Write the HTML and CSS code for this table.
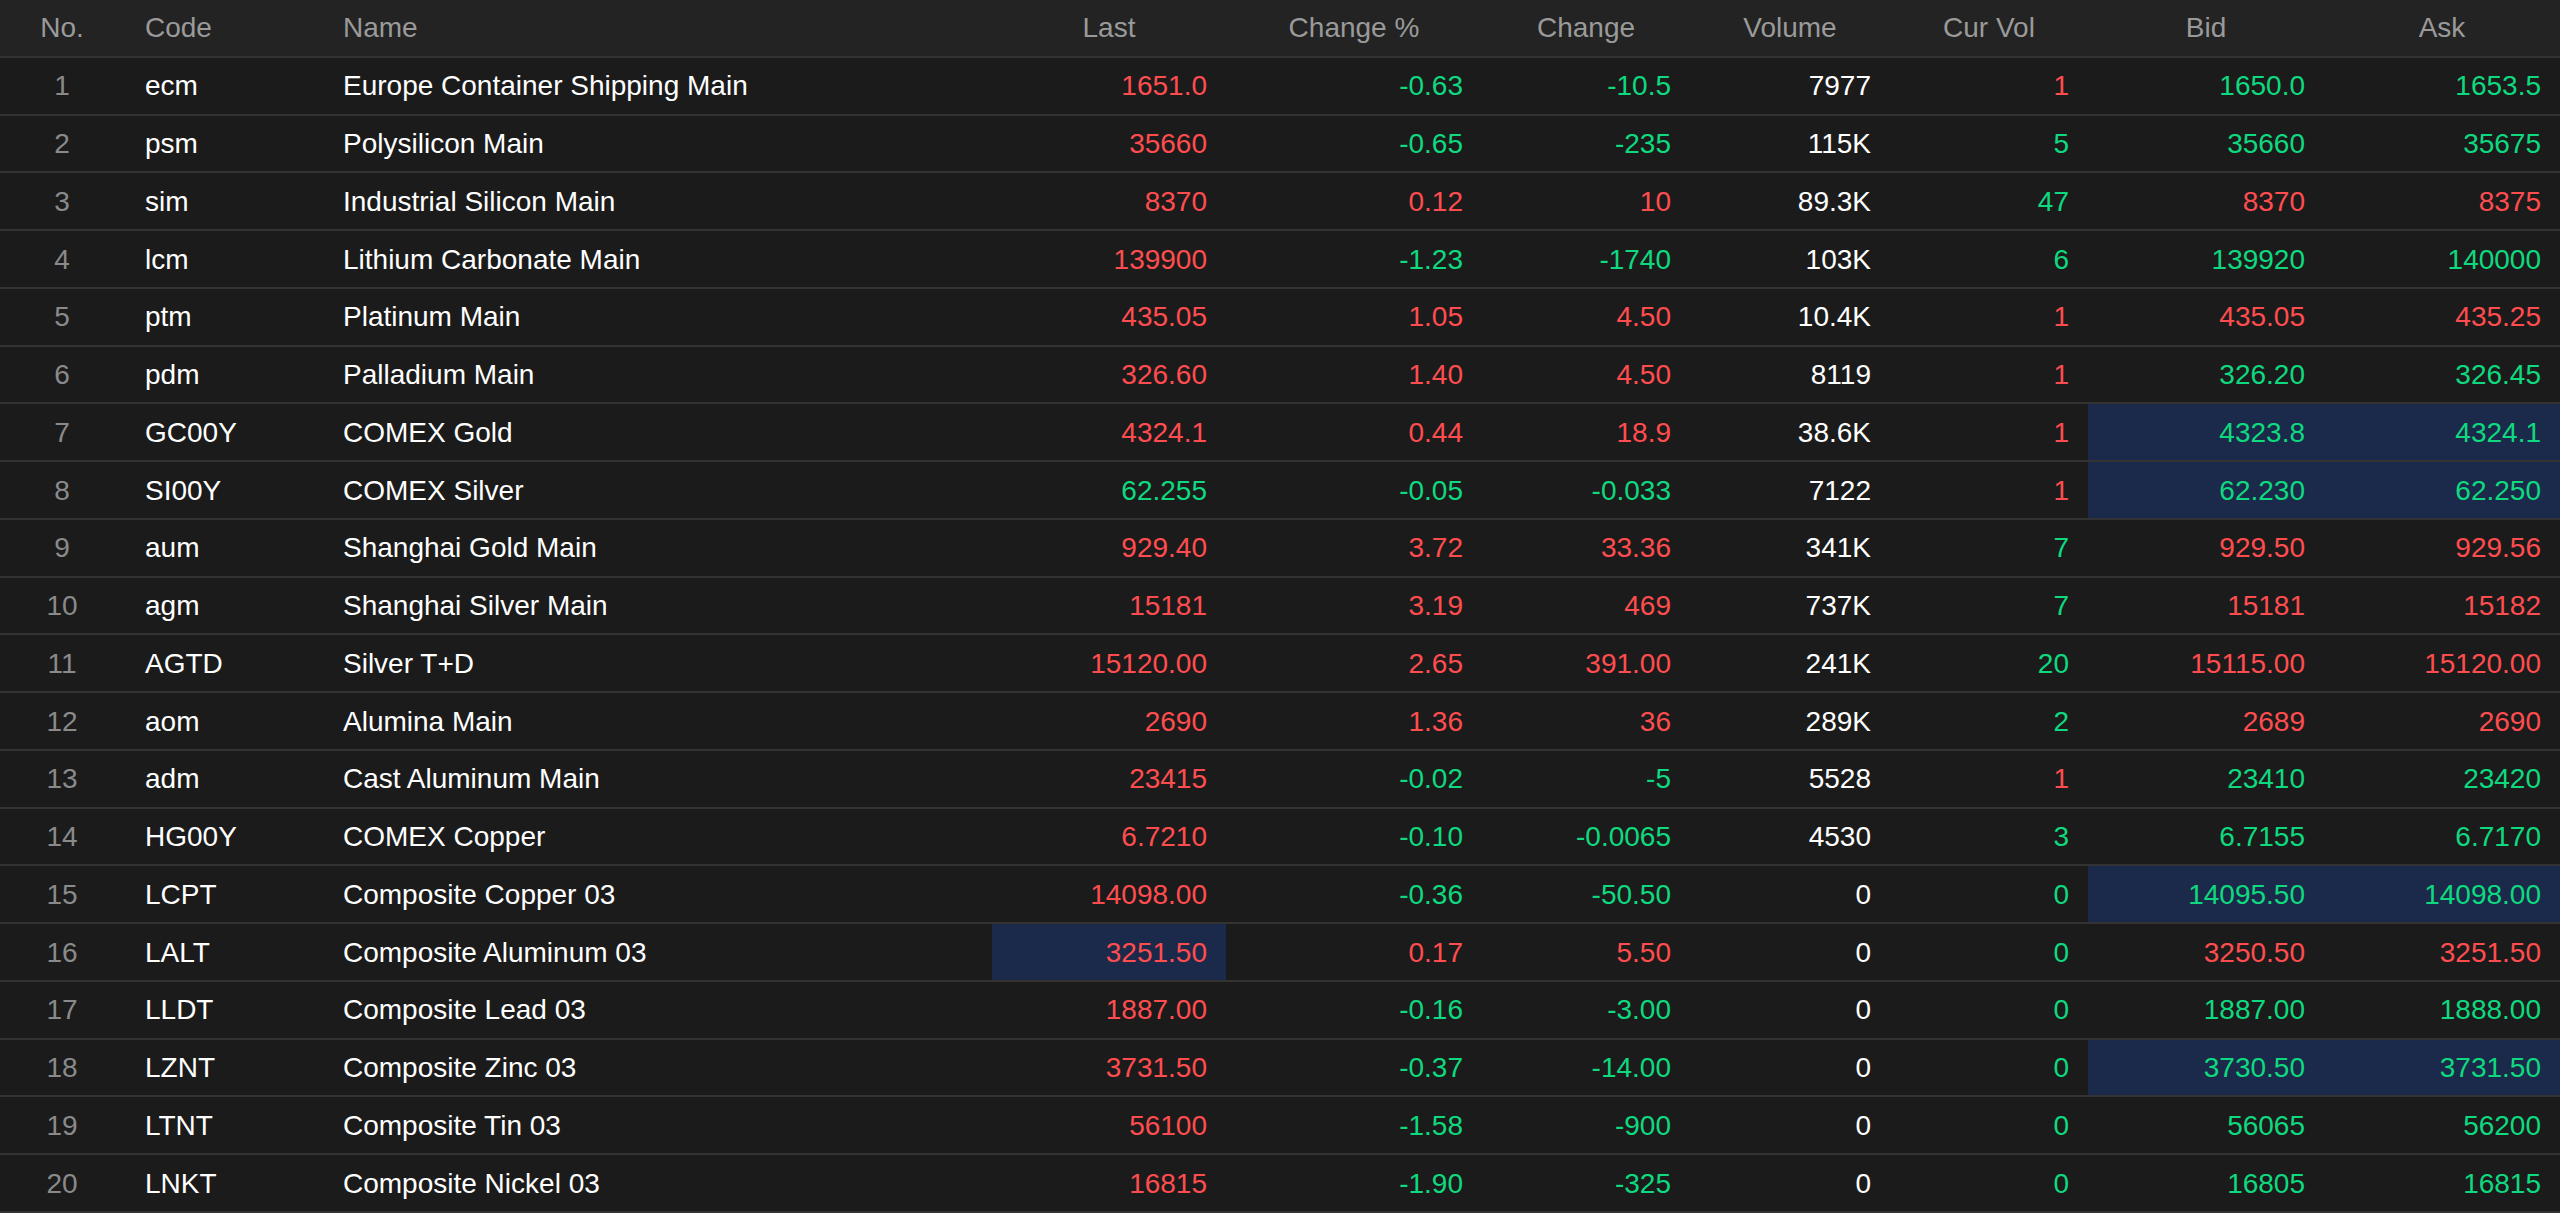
FILE: index.html
```html
<!DOCTYPE html>
<html lang="en">
<head>
<meta charset="utf-8">
<title>Quotes</title>
<link rel="stylesheet" href="styles.css">
</head>
<body>
<table class="quotes">
  <colgroup>
    <col class="c-no"><col class="c-code"><col class="c-name"><col class="c-last"><col class="c-pct"><col class="c-chg"><col class="c-vol"><col class="c-cur"><col class="c-bid"><col class="c-ask">
  </colgroup>
  <thead>
    <tr>
      <th class="center">No.</th>
      <th class="left">Code</th>
      <th class="left">Name</th>
      <th class="center">Last</th>
      <th class="center">Change %</th>
      <th class="center">Change</th>
      <th class="center">Volume</th>
      <th class="center">Cur Vol</th>
      <th class="center">Bid</th>
      <th class="center">Ask</th>
    </tr>
  </thead>
  <tbody>
    <tr><td class="no">1</td><td class="txt">ecm</td><td class="txt">Europe Container Shipping Main</td><td class="num up">1651.0</td><td class="num down">-0.63</td><td class="num down">-10.5</td><td class="num vol">7977</td><td class="num up">1</td><td class="num down">1650.0</td><td class="num down">1653.5</td></tr>
    <tr><td class="no">2</td><td class="txt">psm</td><td class="txt">Polysilicon Main</td><td class="num up">35660</td><td class="num down">-0.65</td><td class="num down">-235</td><td class="num vol">115K</td><td class="num down">5</td><td class="num down">35660</td><td class="num down">35675</td></tr>
    <tr><td class="no">3</td><td class="txt">sim</td><td class="txt">Industrial Silicon Main</td><td class="num up">8370</td><td class="num up">0.12</td><td class="num up">10</td><td class="num vol">89.3K</td><td class="num down">47</td><td class="num up">8370</td><td class="num up">8375</td></tr>
    <tr><td class="no">4</td><td class="txt">lcm</td><td class="txt">Lithium Carbonate Main</td><td class="num up">139900</td><td class="num down">-1.23</td><td class="num down">-1740</td><td class="num vol">103K</td><td class="num down">6</td><td class="num down">139920</td><td class="num down">140000</td></tr>
    <tr><td class="no">5</td><td class="txt">ptm</td><td class="txt">Platinum Main</td><td class="num up">435.05</td><td class="num up">1.05</td><td class="num up">4.50</td><td class="num vol">10.4K</td><td class="num up">1</td><td class="num up">435.05</td><td class="num up">435.25</td></tr>
    <tr><td class="no">6</td><td class="txt">pdm</td><td class="txt">Palladium Main</td><td class="num up">326.60</td><td class="num up">1.40</td><td class="num up">4.50</td><td class="num vol">8119</td><td class="num up">1</td><td class="num down">326.20</td><td class="num down">326.45</td></tr>
    <tr><td class="no">7</td><td class="txt">GC00Y</td><td class="txt">COMEX Gold</td><td class="num up">4324.1</td><td class="num up">0.44</td><td class="num up">18.9</td><td class="num vol">38.6K</td><td class="num up">1</td><td class="num down hl">4323.8</td><td class="num down hl">4324.1</td></tr>
    <tr><td class="no">8</td><td class="txt">SI00Y</td><td class="txt">COMEX Silver</td><td class="num down">62.255</td><td class="num down">-0.05</td><td class="num down">-0.033</td><td class="num vol">7122</td><td class="num up">1</td><td class="num down hl">62.230</td><td class="num down hl">62.250</td></tr>
    <tr><td class="no">9</td><td class="txt">aum</td><td class="txt">Shanghai Gold Main</td><td class="num up">929.40</td><td class="num up">3.72</td><td class="num up">33.36</td><td class="num vol">341K</td><td class="num down">7</td><td class="num up">929.50</td><td class="num up">929.56</td></tr>
    <tr><td class="no">10</td><td class="txt">agm</td><td class="txt">Shanghai Silver Main</td><td class="num up">15181</td><td class="num up">3.19</td><td class="num up">469</td><td class="num vol">737K</td><td class="num down">7</td><td class="num up">15181</td><td class="num up">15182</td></tr>
    <tr><td class="no">11</td><td class="txt">AGTD</td><td class="txt">Silver T+D</td><td class="num up">15120.00</td><td class="num up">2.65</td><td class="num up">391.00</td><td class="num vol">241K</td><td class="num down">20</td><td class="num up">15115.00</td><td class="num up">15120.00</td></tr>
    <tr><td class="no">12</td><td class="txt">aom</td><td class="txt">Alumina Main</td><td class="num up">2690</td><td class="num up">1.36</td><td class="num up">36</td><td class="num vol">289K</td><td class="num down">2</td><td class="num up">2689</td><td class="num up">2690</td></tr>
    <tr><td class="no">13</td><td class="txt">adm</td><td class="txt">Cast Aluminum Main</td><td class="num up">23415</td><td class="num down">-0.02</td><td class="num down">-5</td><td class="num vol">5528</td><td class="num up">1</td><td class="num down">23410</td><td class="num down">23420</td></tr>
    <tr><td class="no">14</td><td class="txt">HG00Y</td><td class="txt">COMEX Copper</td><td class="num up">6.7210</td><td class="num down">-0.10</td><td class="num down">-0.0065</td><td class="num vol">4530</td><td class="num down">3</td><td class="num down">6.7155</td><td class="num down">6.7170</td></tr>
    <tr><td class="no">15</td><td class="txt">LCPT</td><td class="txt">Composite Copper 03</td><td class="num up">14098.00</td><td class="num down">-0.36</td><td class="num down">-50.50</td><td class="num vol">0</td><td class="num down">0</td><td class="num down hl">14095.50</td><td class="num down hl">14098.00</td></tr>
    <tr><td class="no">16</td><td class="txt">LALT</td><td class="txt">Composite Aluminum 03</td><td class="num up hl">3251.50</td><td class="num up">0.17</td><td class="num up">5.50</td><td class="num vol">0</td><td class="num down">0</td><td class="num up">3250.50</td><td class="num up">3251.50</td></tr>
    <tr><td class="no">17</td><td class="txt">LLDT</td><td class="txt">Composite Lead 03</td><td class="num up">1887.00</td><td class="num down">-0.16</td><td class="num down">-3.00</td><td class="num vol">0</td><td class="num down">0</td><td class="num down">1887.00</td><td class="num down">1888.00</td></tr>
    <tr><td class="no">18</td><td class="txt">LZNT</td><td class="txt">Composite Zinc 03</td><td class="num up">3731.50</td><td class="num down">-0.37</td><td class="num down">-14.00</td><td class="num vol">0</td><td class="num down">0</td><td class="num down hl">3730.50</td><td class="num down hl">3731.50</td></tr>
    <tr><td class="no">19</td><td class="txt">LTNT</td><td class="txt">Composite Tin 03</td><td class="num up">56100</td><td class="num down">-1.58</td><td class="num down">-900</td><td class="num vol">0</td><td class="num down">0</td><td class="num down">56065</td><td class="num down">56200</td></tr>
    <tr><td class="no">20</td><td class="txt">LNKT</td><td class="txt">Composite Nickel 03</td><td class="num up">16815</td><td class="num down">-1.90</td><td class="num down">-325</td><td class="num vol">0</td><td class="num down">0</td><td class="num down">16805</td><td class="num down">16815</td></tr>
  </tbody>
</table>
</body>
</html>
```

FILE: styles.css
```css
html, body {
  margin: 0;
  padding: 0;
  background: #ffffff;
}

body {
  font-family: "Liberation Sans", Arial, sans-serif;
  font-size: 28px;
}

.quotes {
  width: 100%;
  table-layout: fixed;
  border-collapse: separate;
  border-spacing: 0;
  background: #1b1b1b;
}

.c-no { width: 124px; }
.c-code { width: 198px; }
.c-name { width: 670px; }
.c-last { width: 234px; }
.c-pct { width: 256px; }
.c-chg { width: 208px; }
.c-vol { width: 200px; }
.c-cur { width: 198px; }
.c-bid { width: 236px; }
.c-ask { width: 236px; }

.quotes th,
.quotes td {
  padding: 0 19px;
  line-height: 55.75px;
  border-bottom: 2px solid #333333;
  white-space: nowrap;
  overflow: hidden;
}

.quotes td {
  padding-top: 1.5px;
  line-height: 54.25px;
}

.quotes th {
  background: #232323;
  color: #9a9a9a;
  font-weight: normal;
}

.quotes th.center { text-align: center; }
.quotes th.left { text-align: left; padding-left: 21px; }

.quotes td.no {
  text-align: center;
  color: #8a8a8a;
}

.quotes td.txt {
  text-align: left;
  padding-left: 21px;
  color: #ffffff;
}

.quotes td.num {
  text-align: right;
}

.quotes td.vol { color: #ffffff; }
.quotes td.up { color: #ff4d4f; }
.quotes td.down { color: #0fd97f; }

.quotes td.hl {
  background: #1b2a4a;
}
```
